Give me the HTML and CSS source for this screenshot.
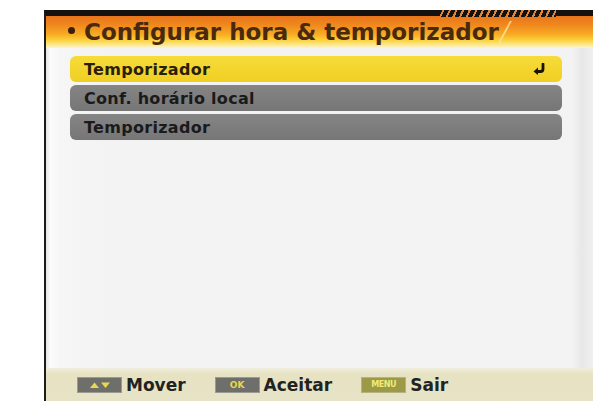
FILE: index.html
```html
<!DOCTYPE html>
<html lang="pt">
<head>
    <meta charset="UTF-8">
    <title>Configurar hora &amp; temporizador</title>
    <link rel="stylesheet" href="styles.css">
</head>
<body>
    <div class="screen">
        <div class="title-bar">
            <span class="bullet"></span>
            <h1>Configurar hora &amp; temporizador</h1>
            <span class="hatch"></span>
            <span class="slash"></span>
        </div>

        <ul class="menu">
            <li class="item active">
                <span>Temporizador</span>
                <svg class="enter" width="14" height="12" viewBox="0 0 14 12">
                    <path d="M11 1 V6 Q11 8.5 8.5 8.5 H5" fill="none" stroke="#1a1408" stroke-width="2.8" stroke-linecap="round"/>
                    <path d="M1.5 8.5 L6 4.6 L6 12 Z" fill="#1a1408"/>
                </svg>
            </li>
            <li class="item">Conf. horário local</li>
            <li class="item">Temporizador</li>
        </ul>

        <div class="footer">
            <span class="key key-arrows">
                <svg width="22" height="8" viewBox="0 0 22 8">
                    <path d="M1 7 L5.5 1.5 L10 7 Z" fill="#e8d84a"/>
                    <path d="M12 1.5 L21 1.5 L16.5 7 Z" fill="#e8d84a"/>
                </svg>
            </span>
            <span class="label">Mover</span>
            <span class="key key-ok">OK</span>
            <span class="label">Aceitar</span>
            <span class="key key-menu">MENU</span>
            <span class="label">Sair</span>
        </div>
    </div>
</body>
</html>
```

FILE: styles.css
```css
body {
    margin: 0;
    background: #ffffff;
    overflow: hidden;
    font-family: "DejaVu Sans", Verdana, sans-serif;
}
.screen {
    margin: 10px 0 0 44px;
    width: 549px;
    height: 391px;
    border-top: 6px solid #141210;
    border-left: 2px solid #1c1c1c;
    box-sizing: border-box;
    background: linear-gradient(to right, #e4e4e4 0, #fbfbfb 4px, #f6f6f6 14px, #f3f3f3 60px, #f3f3f3 96%, #e8e8e8 98%, #f0f0f0 100%);
    display: flex;
    flex-direction: column;
}
.title-bar {
    position: relative;
    height: 32px;
    display: flex;
    align-items: center;
    padding-left: 22px;
    background: linear-gradient(to bottom, #e8741c 0, #f08a1e 30%, #f7ad24 58%, #fbd03a 75%, #fbe27a 86%, #fdf4cc 100%);
}
.bullet {
    width: 7px;
    height: 7px;
    border-radius: 50%;
    background: #3a2008;
    margin-right: 9px;
    margin-top: -4px;
}
h1 {
    margin: 0;
    font-size: 23px;
    font-weight: bold;
    color: #4a2a0e;
}
.hatch {
    position: absolute;
    top: -6px;
    left: 394px;
    width: 116px;
    height: 7px;
    background: repeating-linear-gradient(115deg, #141210 0, #141210 2px, #d97a2a 2px, #e89040 4px, #141210 4px, #141210 6px);
}
.slash {
    position: absolute;
    top: 5px;
    left: 458px;
    width: 2px;
    height: 22px;
    background: #fde6a0;
    transform: skewX(-28deg);
    opacity: 0.8;
}
.menu {
    list-style: none;
    margin: 8px 0 0 0;
    padding: 0 31px 0 24px;
    display: flex;
    flex-direction: column;
    gap: 3px;
}
.item {
    height: 26px;
    border-radius: 6px;
    background: linear-gradient(to bottom, #858585, #767676);
    display: flex;
    align-items: center;
    justify-content: space-between;
    padding: 0 16px 0 14px;
    font-size: 16px;
    font-weight: bold;
    letter-spacing: 0.3px;
    color: #1a1a1a;
}
.item.active {
    background: linear-gradient(to bottom, #f6dc3a, #f0cf22);
    color: #2a1e08;
}
.footer {
    margin-top: auto;
    height: 33px;
    background: linear-gradient(to bottom, #f0eddd 0, #e6e2c2 20%, #e7e3c6 100%);
    display: flex;
    align-items: center;
    padding-left: 31px;
}
.key {
    width: 45px;
    height: 16px;
    box-sizing: border-box;
    border: 1px solid #9a9a90;
    background: #6e6e6a;
    display: flex;
    align-items: center;
    justify-content: center;
    font-size: 9px;
    font-weight: bold;
    color: #e8d84a;
}
.key-menu {
    background: #9c9a48;
    border-color: #b4b280;
    color: #f0ec70;
    font-size: 8px;
    letter-spacing: -0.5px;
}
.label {
    font-size: 17px;
    font-weight: bold;
    color: #222222;
    margin: 0 29px 0 4px;
}
```
